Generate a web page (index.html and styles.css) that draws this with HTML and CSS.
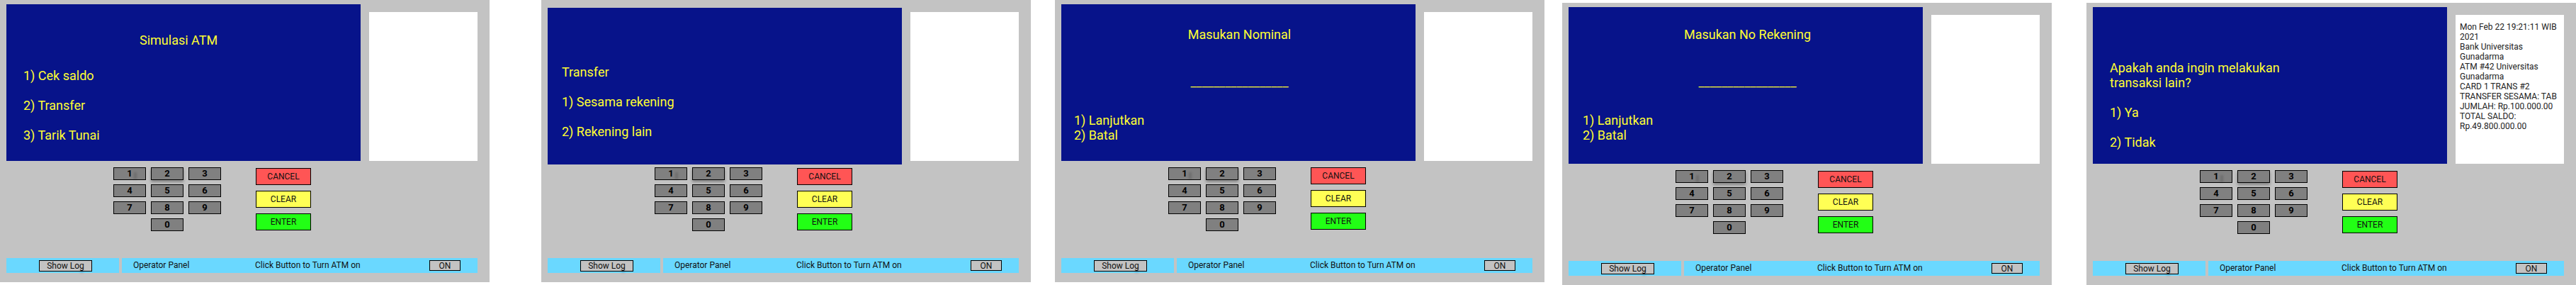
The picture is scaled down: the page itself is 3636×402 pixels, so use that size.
FILE: index.html
```html
<!DOCTYPE html>
<html lang="id">
<head>
  <meta charset="UTF-8">
  <title>Simulasi ATM</title>
  <link rel="stylesheet" href="styles.css">
</head>
<body>
  <!-- Menu utama -->
  <section class="atm atm-main">
    <div class="atm-top">
      <div class="screen screen-main">
        <p class="title">Simulasi ATM</p>
        <p class="line">1) Cek saldo</p>
        <p class="line">2) Transfer</p>
        <p class="line">3) Tarik Tunai</p>
      </div>
      <div class="paper"></div>
    </div>
    <div class="atm-mid">
      <div class="keypad">
        <button class="key key-one">1</button><button class="key key-two">2</button><button class="key">3</button>
        <button class="key">4</button><button class="key">5</button><button class="key">6</button>
        <button class="key">7</button><button class="key">8</button><button class="key">9</button>
        <button class="key key-zero">0</button>
      </div>
      <div class="actions">
        <button class="action cancel">CANCEL</button>
        <button class="action clear">CLEAR</button>
        <button class="action enter">ENTER</button>
      </div>
    </div>
    <div class="atm-bottom">
      <div class="bar bar-log"><button class="bar-btn log-btn">Show Log</button></div>
      <div class="bar bar-op">
        <span class="op-label">Operator Panel</span>
        <span class="op-hint">Click Button to Turn ATM on</span>
        <button class="bar-btn on-btn">ON</button>
      </div>
    </div>
  </section>

  <!-- Pilih transfer -->
  <section class="atm atm-transfer">
    <div class="atm-top">
      <div class="screen screen-transfer">
        <p class="line">Transfer</p>
        <p class="line">1) Sesama rekening</p>
        <p class="line">2) Rekening lain</p>
      </div>
      <div class="paper"></div>
    </div>
    <div class="atm-mid">
      <div class="keypad">
        <button class="key key-one">1</button><button class="key key-two">2</button><button class="key">3</button>
        <button class="key">4</button><button class="key">5</button><button class="key">6</button>
        <button class="key">7</button><button class="key">8</button><button class="key">9</button>
        <button class="key key-zero">0</button>
      </div>
      <div class="actions">
        <button class="action cancel">CANCEL</button>
        <button class="action clear">CLEAR</button>
        <button class="action enter">ENTER</button>
      </div>
    </div>
    <div class="atm-bottom">
      <div class="bar bar-log"><button class="bar-btn log-btn">Show Log</button></div>
      <div class="bar bar-op">
        <span class="op-label">Operator Panel</span>
        <span class="op-hint">Click Button to Turn ATM on</span>
        <button class="bar-btn on-btn">ON</button>
      </div>
    </div>
  </section>

  <!-- Masukan nominal -->
  <section class="atm atm-nominal">
    <div class="atm-top">
      <div class="screen screen-input">
        <p class="prompt">Masukan Nominal</p>
        <p class="blank">_________________</p>
        <p class="choice">1) Lanjutkan</p>
        <p class="choice">2) Batal</p>
      </div>
      <div class="paper"></div>
    </div>
    <div class="atm-mid">
      <div class="keypad">
        <button class="key key-one">1</button><button class="key key-two">2</button><button class="key">3</button>
        <button class="key">4</button><button class="key">5</button><button class="key">6</button>
        <button class="key">7</button><button class="key">8</button><button class="key">9</button>
        <button class="key key-zero">0</button>
      </div>
      <div class="actions actions-up">
        <button class="action cancel">CANCEL</button>
        <button class="action clear">CLEAR</button>
        <button class="action enter">ENTER</button>
      </div>
    </div>
    <div class="atm-bottom">
      <div class="bar bar-log"><button class="bar-btn log-btn">Show Log</button></div>
      <div class="bar bar-op">
        <span class="op-label">Operator Panel</span>
        <span class="op-hint">Click Button to Turn ATM on</span>
        <button class="bar-btn on-btn">ON</button>
      </div>
    </div>
  </section>

  <!-- Masukan no rekening -->
  <section class="atm atm-rekening">
    <div class="atm-top">
      <div class="screen screen-input screen-input-low">
        <p class="prompt">Masukan No Rekening</p>
        <p class="blank">_________________</p>
        <p class="choice">1) Lanjutkan</p>
        <p class="choice">2) Batal</p>
      </div>
      <div class="paper"></div>
    </div>
    <div class="atm-mid">
      <div class="keypad">
        <button class="key key-one">1</button><button class="key key-two">2</button><button class="key">3</button>
        <button class="key">4</button><button class="key">5</button><button class="key">6</button>
        <button class="key">7</button><button class="key">8</button><button class="key">9</button>
        <button class="key key-zero">0</button>
      </div>
      <div class="actions">
        <button class="action cancel">CANCEL</button>
        <button class="action clear">CLEAR</button>
        <button class="action enter">ENTER</button>
      </div>
    </div>
    <div class="atm-bottom">
      <div class="bar bar-log"><button class="bar-btn log-btn">Show Log</button></div>
      <div class="bar bar-op">
        <span class="op-label">Operator Panel</span>
        <span class="op-hint">Click Button to Turn ATM on</span>
        <button class="bar-btn on-btn">ON</button>
      </div>
    </div>
  </section>

  <!-- Transaksi lain + struk -->
  <section class="atm atm-last">
    <div class="atm-top">
      <div class="screen screen-last">
        <p class="choice">Apakah anda ingin melakukan</p>
        <p class="choice">transaksi lain?</p>
        <p class="line">1) Ya</p>
        <p class="line">2) Tidak</p>
      </div>
      <div class="paper">Mon Feb 22 19:21:11 WIB 2021<br>Bank Universitas Gunadarma<br>ATM #42 Universitas Gunadarma<br>CARD 1 TRANS #2<br>TRANSFER SESAMA: TAB<br>JUMLAH: Rp.100.000.00<br>TOTAL SALDO: Rp.49.800.000.00</div>
    </div>
    <div class="atm-mid">
      <div class="keypad">
        <button class="key key-one">1</button><button class="key key-two">2</button><button class="key">3</button>
        <button class="key">4</button><button class="key">5</button><button class="key">6</button>
        <button class="key">7</button><button class="key">8</button><button class="key">9</button>
        <button class="key key-zero">0</button>
      </div>
      <div class="actions">
        <button class="action cancel">CANCEL</button>
        <button class="action clear">CLEAR</button>
        <button class="action enter">ENTER</button>
      </div>
    </div>
    <div class="atm-bottom">
      <div class="bar bar-log"><button class="bar-btn log-btn">Show Log</button></div>
      <div class="bar bar-op">
        <span class="op-label">Operator Panel</span>
        <span class="op-hint">Click Button to Turn ATM on</span>
        <button class="bar-btn on-btn">ON</button>
      </div>
    </div>
  </section>
</body>
</html>
```

FILE: styles.css
```css
* {
  margin: 0;
  padding: 0;
  box-sizing: border-box;
}

body {
  display: flex;
  width: 3636px;
  height: 402px;
  overflow: hidden;
  background-color: #fff;
  font-family: Roboto, Arial, sans-serif;
}

button {
  font-family: Roboto, Arial, sans-serif;
  color: #111;
  border: 1px solid #000;
  border-radius: 0;
}

.atm {
  flex: none;
  width: 691px;
  height: 398px;
  padding-left: 9px;
  background-color: #c3c3c3;
}

.atm-transfer { margin-left: 73px; }
.atm-nominal { margin-left: 34px; }
.atm-rekening { margin-left: 25px; margin-top: 4px; }
.atm-last { margin-left: 49px; margin-top: 4px; }

/* layar + struk */
.atm-top {
  display: flex;
  align-items: flex-start;
  height: 227px;
  padding-top: 6px;
}

.screen {
  flex: none;
  width: 500px;
  height: 221px;
  background-color: #07138a;
  color: #ffff33;
  font-size: 18px;
  line-height: 21px;
}

.screen-main { padding: 40px 0 0 24px; }
.screen-main .title { margin: 0 0 29px 164px; }

.screen-transfer {
  margin-top: 5px;
  padding: 80px 0 0 20px;
}
.line { margin-bottom: 21px; }

.screen-input { padding: 32px 15px 0 18px; }
.screen-input-low { padding: 28px 15px 0 20px; }
.prompt, .blank { text-align: center; }
.blank { margin: 46px 0 33px; }

.screen-last { padding: 75px 0 0 24px; }
.screen-last .choice:nth-child(2) { margin-bottom: 21px; }

.paper {
  flex: none;
  width: 153px;
  height: 210px;
  margin: 11px 0 0 12px;
  padding: 10px 6px;
  background-color: #fff;
  color: #222;
  font-size: 12px;
  line-height: 14px;
}

/* keypad + tombol aksi */
.atm-mid {
  display: flex;
  align-items: flex-start;
  height: 137px;
  padding-top: 9px;
}

.keypad {
  display: grid;
  grid-template-columns: repeat(3, 46px);
  grid-auto-rows: 18px;
  column-gap: 7px;
  row-gap: 6px;
  margin-left: 151px;
}

.key {
  position: relative;
  background-color: #808080;
  color: #000;
  font-size: 13px;
  font-weight: 700;
  line-height: 16px;
}

.key-zero { grid-column: 2; }
.key-two { box-shadow: 0 3px 4px rgba(0, 0, 0, 0.3); }

/* bekas bayangan di tombol 1 */
.key-one::after {
  content: "";
  position: absolute;
  top: 6px;
  right: 12px;
  width: 4px;
  height: 10px;
  background-color: rgba(0, 0, 0, 0.14);
  filter: blur(1.5px);
}

.actions {
  display: flex;
  flex-direction: column;
  gap: 8px;
  margin: 1px 0 0 49px;
}
.actions-up { margin-top: 0; }

.action {
  width: 78px;
  height: 24px;
  font-size: 12px;
  line-height: 15px;
}

.cancel { background-color: #ff5555; }
.clear { background-color: #ffff55; }
.enter { background-color: #22ff15; }

/* panel operator */
.atm-bottom {
  display: flex;
  gap: 4px;
}

.bar {
  display: flex;
  align-items: flex-start;
  height: 21px;
  padding-top: 3px;
  background-color: #6ad8ff;
  font-size: 12px;
  line-height: 15px;
  color: #111;
}

.bar-log {
  width: 159px;
  padding-left: 46px;
}

.bar-op {
  width: 502px;
  padding-left: 16px;
}

.op-label { width: 172px; }
.op-hint { width: 246px; }

.bar-btn {
  background-color: #c3c3c3;
  font-size: 12px;
  line-height: 14px;
}

.log-btn {
  position: relative;
  width: 75px;
  height: 16px;
}

.log-btn::after {
  content: "";
  position: absolute;
  right: 11px;
  bottom: -3px;
  width: 5px;
  height: 5px;
  background-color: rgba(0, 0, 0, 0.12);
  filter: blur(1.5px);
}

.on-btn {
  width: 44px;
  height: 15px;
}
```
